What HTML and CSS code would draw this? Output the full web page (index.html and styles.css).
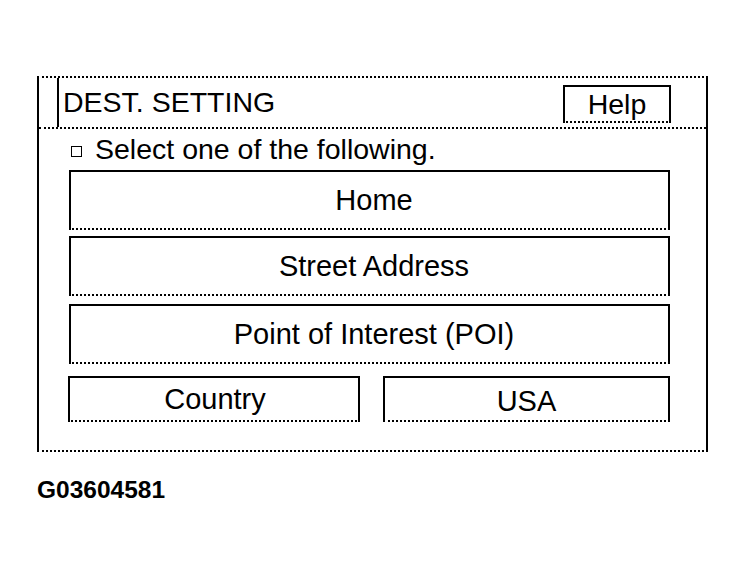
FILE: index.html
```html
<!DOCTYPE html>
<html>
<head>
<meta charset="utf-8">
<link rel="stylesheet" href="styles.css">
</head>
<body>
<div class="frame">
  <div class="header">
    <div class="stub"></div>
    <div class="title">DEST. SETTING</div>
    <div class="help">Help</div>
  </div>
  <div class="content">
    <div class="prompt"><span class="box"></span>Select one of the following.</div>
    <div class="btn big">Home</div>
    <div class="btn big gap6">Street Address</div>
    <div class="btn big gap8">Point of Interest (POI)</div>
    <div class="row">
      <div class="btn small country">Country</div>
      <div class="btn small usa">USA</div>
    </div>
  </div>
</div>
<div class="code">G03604581</div>
</body>
</html>
```
FILE: styles.css
```css
* { box-sizing: border-box; }
body {
  margin: 0;
  background: #fff;
  font-family: "Liberation Sans", Arial, sans-serif;
  color: #000;
}
.frame {
  margin: 76px 0 0 37px;
  width: 671px;
  height: 376px;
  border-left: 2px solid #000;
  border-right: 2px solid #000;
  border-top: 2px dotted #000;
  border-bottom: 2px dotted #000;
}
.header {
  display: flex;
  height: 51px;
  border-bottom: 2px dotted #000;
}
.stub {
  width: 20px;
  border-right: 2px solid #000;
}
.title {
  font-size: 28.5px;
  line-height: 49px;
  padding-left: 4px;
}
.help {
  margin: 7px 35px 0 auto;
  width: 108px;
  height: 38px;
  border: 2px solid #000;
  border-bottom: 2px dotted #000;
  font-size: 28.5px;
  line-height: 34px;
  text-align: center;
}
.content {
  padding: 0 36px 0 30px;
}
.prompt {
  height: 41px;
  display: flex;
  align-items: center;
  padding-left: 2px;
  font-size: 28.5px;
}
.box {
  width: 11px;
  height: 11px;
  border: 1px solid #000;
  margin-right: 13px;
  margin-top: 3px;
}
.btn {
  border: 2px solid #000;
  border-bottom: 2px dotted #000;
  font-size: 29px;
  text-align: center;
}
.big {
  height: 60px;
  line-height: 56px;
  padding-left: 9px;
}
.gap6 { margin-top: 6px; }
.gap8 { margin-top: 8px; }
.row {
  display: flex;
  margin-top: 12px;
  gap: 23px;
}
.small {
  height: 46px;
  line-height: 42px;
}
.country { width: 292px; margin-left: -1px; padding-left: 2px; }
.usa { width: 287px; line-height: 46px; }
.code {
  margin: 24px 0 0 37px;
  font-size: 24.5px;
  font-weight: bold;
}
```
